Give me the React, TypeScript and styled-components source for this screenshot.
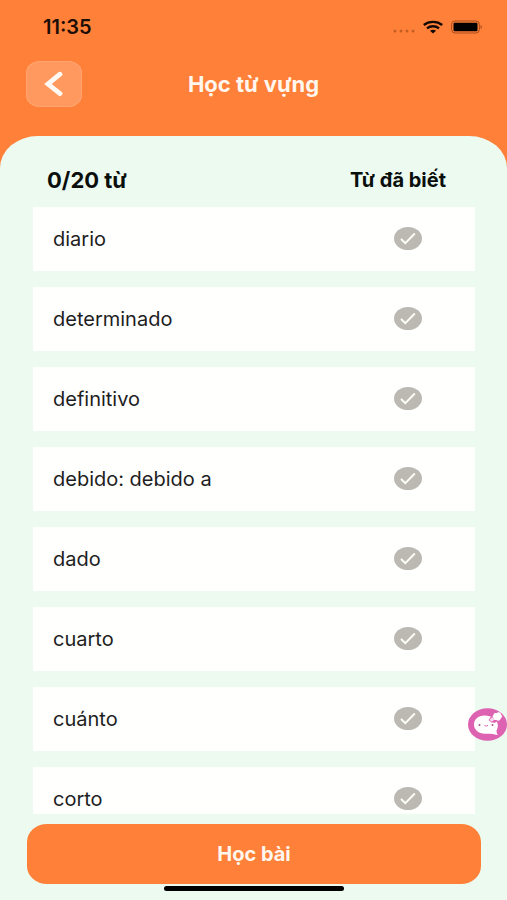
import React, { useState } from "react";
import styled, { createGlobalStyle } from "styled-components";

const GlobalStyle = createGlobalStyle`
  * { box-sizing: border-box; }
  body { margin: 0; background: #ecfaf0; font-family: Inter, "Noto Sans", sans-serif; }
  button { font-family: inherit; border: 0; padding: 0; cursor: pointer; }
`;

const Screen = styled.div`
  position: relative;
  display: flex;
  flex-direction: column;
  height: 100vh;
  background: #ff8038;
`;

const StatusBar = styled.div`
  display: flex;
  align-items: center;
  justify-content: space-between;
  height: 54px;
  padding: 0 24px 0 43px;
`;

const Clock = styled.time`
  font-size: 20px;
  line-height: 24px;
  font-weight: 600;
  color: #1c0e06;
`;

const StatusIcons = styled.div`
  display: flex;
  align-items: center;
  gap: 8px;
  svg { display: block; }
`;

const Header = styled.header`
  display: grid;
  grid-template-columns: 56px 1fr 56px;
  align-items: center;
  height: 82px;
  padding: 0 26px 22px;
`;

const BackButton = styled.button`
  display: flex;
  align-items: center;
  justify-content: center;
  height: 46px;
  border-radius: 14px / 12px;
  background: #ff9960;
  box-shadow: inset 0 0 0 1px #ffa470;
`;

const Title = styled.h1`
  margin: 0;
  text-align: center;
  font-size: 22px;
  line-height: 26px;
  font-weight: 700;
  color: #fff6ee;
`;

const Sheet = styled.main`
  flex: 1;
  min-height: 0;
  display: flex;
  flex-direction: column;
  padding-top: 30px;
  border-radius: 38px 38px 0 0 / 32px 32px 0 0;
  background: #ecfaf0;
`;

const ListHeader = styled.div`
  display: flex;
  align-items: center;
  justify-content: space-between;
  height: 41px;
  padding: 0 61px 14px 47px;
  line-height: 26px;
  color: #0a0f0c;
`;

const Count = styled.strong`
  font-size: 22px;
  font-weight: 700;
`;

const KnownLabel = styled.strong`
  font-size: 20px;
  font-weight: 700;
`;

const WordList = styled.ul`
  flex: 1;
  min-height: 0;
  display: flex;
  flex-direction: column;
  gap: 16px;
  margin: 0 32px 0 33px;
  padding: 0;
  list-style: none;
  overflow-y: auto;
  scrollbar-width: none;
`;

const WordRow = styled.label`
  display: flex;
  align-items: center;
  justify-content: space-between;
  height: 64px;
  padding: 0 53px 0 20px;
  background: #fffffe;
  font-size: 20px;
  line-height: 24px;
  color: #1e1e1e;
  cursor: pointer;
`;

const CheckWrap = styled.span`
  display: grid;
  width: 28px;
  height: 24px;
  > * { grid-area: 1 / 1; }
`;

const CheckInput = styled.input`
  appearance: none;
  width: 28px;
  height: 23px;
  margin: 0;
  border-radius: 50%;
  background: #bbb9b2;
  cursor: pointer;
  &:checked { background: #ff8038; }
`;

const CheckMark = styled.svg`
  pointer-events: none;
`;

const Footer = styled.footer`
  display: flex;
  flex-direction: column;
  align-items: center;
  gap: 2px;
  padding: 10px 26px 9px 27px;
`;

const StudyButton = styled.button`
  width: 100%;
  height: 60px;
  border-radius: 20px / 18px;
  background: #ff8038;
  font-size: 20px;
  line-height: 24px;
  font-weight: 700;
  color: #fff6ee;
`;

const HomeIndicator = styled.div`
  width: 180px;
  height: 5px;
  border-radius: 3px;
  background: #000;
`;

const ChatButton = styled.button`
  position: absolute;
  right: 0;
  bottom: 159px;
  width: 39px;
  height: 33px;
  background: none;
  svg { display: block; }
`;

const words = [
  "diario",
  "determinado",
  "definitivo",
  "debido: debido a",
  "dado",
  "cuarto",
  "cuánto",
  "corto",
];

function SignalIcon() {
  return (
    <svg width="23" height="14" viewBox="0 0 23 14" fill="#c45e24" aria-hidden="true">
      <circle cx="3" cy="11" r="1.5" />
      <circle cx="9" cy="11" r="1.5" />
      <circle cx="15" cy="11" r="1.5" />
      <circle cx="21" cy="11" r="1.5" />
    </svg>
  );
}

function WifiIcon() {
  return (
    <svg width="20" height="14" viewBox="0 0 20 14" fill="none" stroke="#140a04" strokeWidth="2.4" aria-hidden="true">
      <path d="M.8 5C5.800.8 14.200.8 19.200 5" />
      <path d="M4 8.400c3.300-2.800 8.700-2.800 12 0" />
      <path d="M7 10.800c1.700-1.500 4.300-1.500 6 0L10 13.600z" fill="#140a04" stroke="none" />
    </svg>
  );
}

function BatteryIcon() {
  return (
    <svg width="32" height="14" viewBox="0 0 32 14" aria-hidden="true">
      <rect x=".6" y="1" width="27.8" height="12" rx="3.5" fill="none" stroke="#a84d1c" />
      <rect x="2.5" y="2.8" width="24" height="8.4" rx="1.2" fill="#000" />
      <path d="M29.600 5v4c1.800-.6 1.800-3.400 0-4z" fill="#a84d1c" />
    </svg>
  );
}

function ChatIcon() {
  return (
    <svg width="39" height="33" viewBox="0 0 39 33" aria-hidden="true">
      <ellipse cx="19.5" cy="16.5" rx="19.5" ry="16.3" fill="#dd62b1" />
      <path
        d="M16.500 7.500C10 7.500 6 11.700 6 16.500c0 5.400 4.600 9.200 11 9.200h5.500c2 .2 4.600.9 7.200 1.300-.9-1.700-1.300-3-1.200-4.500 1-1.700 1.500-3.500 1.300-5.700C29.300 11.200 24 7.500 16.500 7.500z"
        fill="#fff"
      />
      <path d="M20.500 12l4-5.500 7.500 5-5 3.200-3.500-.2z" fill="#dd62b1" />
      <path d="M21.500 11.800l2.500-2.600 2.500 2.400-2.700 2.200z" fill="#fbd9ee" />
      <path
        d="M25.500 6.900c.2-1.800 2-2.200 3-1.600 1-1.700 4.600-1.200 4.500 1.200 1.700 1 1.300 3.200-.2 3.800-.3 2.400-3 3-4.300 1.700-1.600.4-3-.3-2.900-1.900-1.400-.7-1.300-2.500-.1-3.200z"
        fill="#fff"
      />
      <circle cx="11.5" cy="17" r="1" fill="#a5568c" />
      <circle cx="24.5" cy="17" r="1" fill="#a5568c" />
      <path d="M16.500 17.300q1.700 1.700 3.500 0" fill="none" stroke="#dd62b1" />
    </svg>
  );
}

export default function App() {
  const [known, setKnown] = useState<string[]>([]);
  const toggle = (word: string) =>
    setKnown((list) => (list.includes(word) ? list.filter((w) => w !== word) : [...list, word]));

  return (
    <Screen>
      <GlobalStyle />
      <StatusBar>
        <Clock>11:35</Clock>
        <StatusIcons>
          <SignalIcon />
          <WifiIcon />
          <BatteryIcon />
        </StatusIcons>
      </StatusBar>
      <Header>
        <BackButton aria-label="Quay lại">
          <svg width="20" height="26" viewBox="0 0 20 26" fill="none" stroke="#fffaf5" strokeWidth="4.8" strokeLinecap="round" aria-hidden="true">
            <path d="M16 3.200L4 13l12 9.600" />
          </svg>
        </BackButton>
        <Title>Học từ vựng</Title>
      </Header>
      <Sheet>
        <ListHeader>
          <Count>{known.length}/20 từ</Count>
          <KnownLabel>Từ đã biết</KnownLabel>
        </ListHeader>
        <WordList>
          {words.map((word) => (
            <li key={word}>
              <WordRow>
                {word}
                <CheckWrap>
                  <CheckInput type="checkbox" checked={known.includes(word)} onChange={() => toggle(word)} />
                  <CheckMark width="28" height="23" viewBox="0 0 28 23" fill="none" stroke="#fffffa" strokeWidth="1.9" aria-hidden="true">
                    <path d="M7 12l4.300 4.200L20.800 6.500" />
                  </CheckMark>
                </CheckWrap>
              </WordRow>
            </li>
          ))}
        </WordList>
        <Footer>
          <StudyButton>Học bài</StudyButton>
          <HomeIndicator />
        </Footer>
      </Sheet>
      <ChatButton aria-label="Trò chuyện">
        <ChatIcon />
      </ChatButton>
    </Screen>
  );
}
